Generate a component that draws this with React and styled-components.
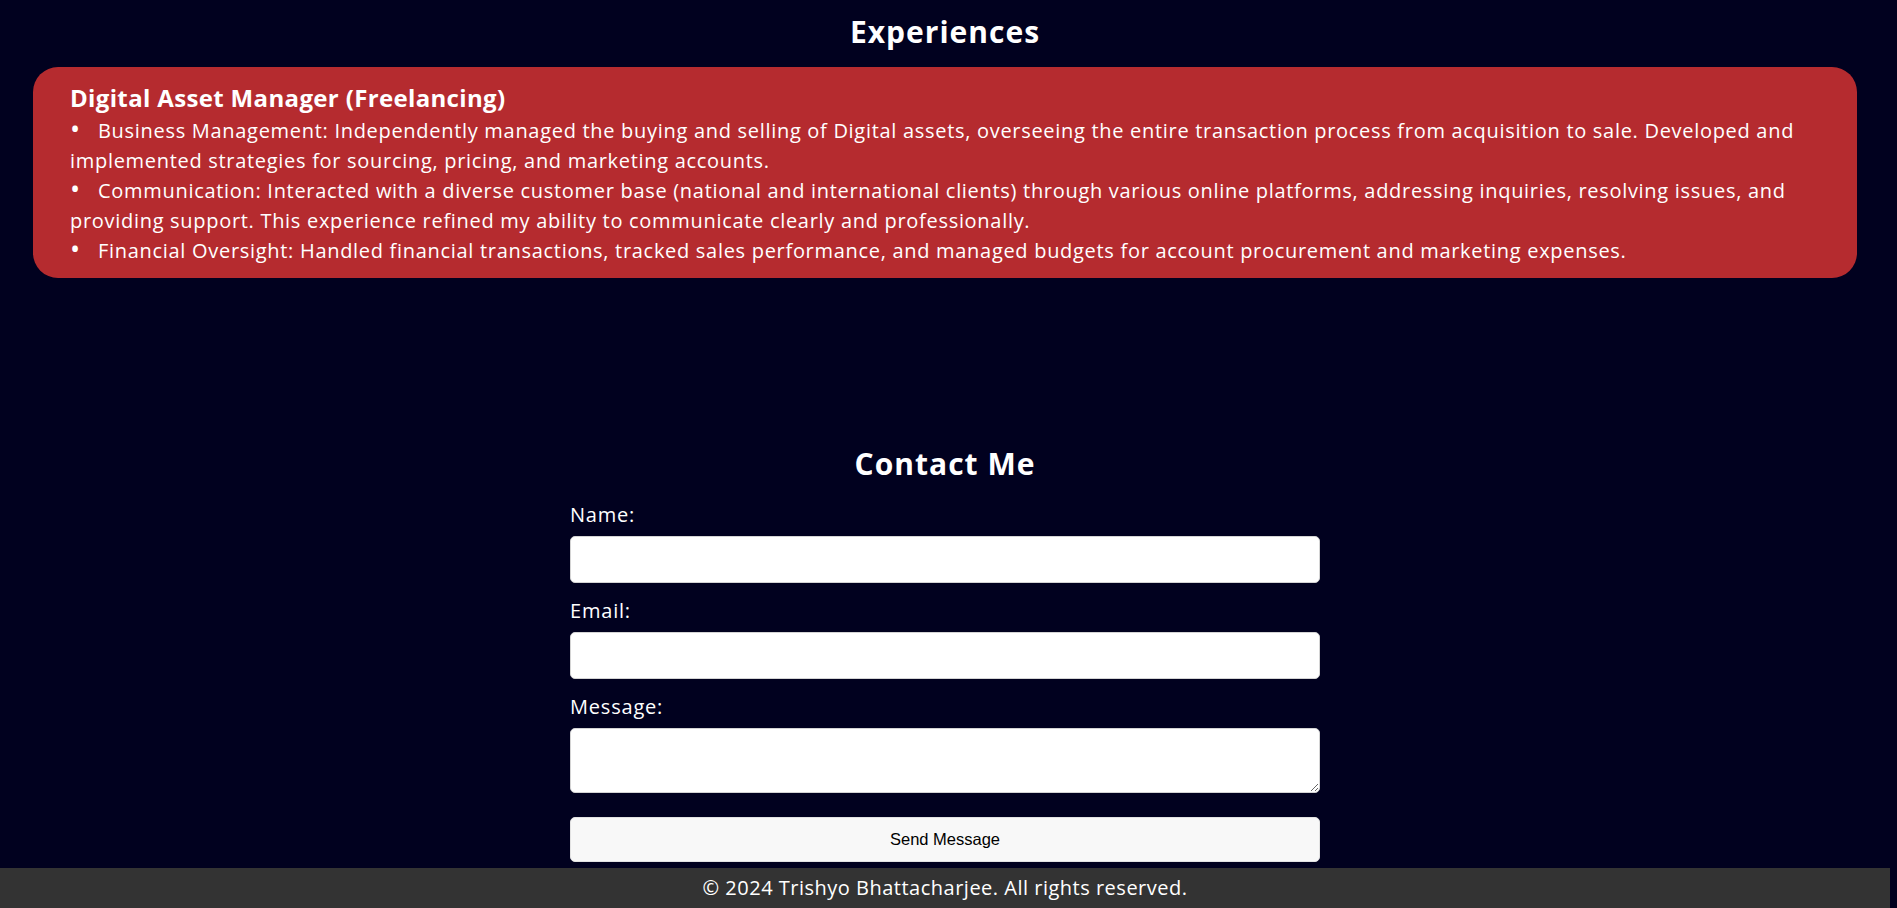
import React from 'react'
import styled, { createGlobalStyle } from 'styled-components'

const GlobalStyle = createGlobalStyle`
  * {
    box-sizing: border-box;
  }
  html,
  body {
    margin: 0;
    padding: 0;
    background: #01011f;
  }
  body {
    font-family: 'Open Sans', 'Liberation Sans', sans-serif;
    color: #fff;
    overflow: hidden;
  }
`

const Page = styled.div`
  min-height: 100vh;
  display: flex;
  flex-direction: column;
  padding-right: 7px;
`
const Section = styled.section`
  display: flex;
  flex-direction: column;
  align-items: center;
  margin-top: ${(p) => p.$top || '0'};
`
const Kicker = styled.p`
  margin: -22px 0 0;
  font-size: 20px;
  line-height: 30px;
  letter-spacing: 0.7px;
  color: #9a9a9a;
`
const Heading = styled.h2`
  margin: ${(p) => p.$top || '0'} 0 0;
  font-size: 30px;
  font-weight: 700;
  line-height: 43px;
  letter-spacing: 1px;
`
const Card = styled.div`
  align-self: stretch;
  margin: 14px 33px 0;
  padding: 13px 37px 12px;
  background: #b52b2f;
  border-radius: 25px;
`
const CardTitle = styled.h3`
  margin: 0;
  font-size: 24px;
  font-weight: 700;
  line-height: 36px;
  letter-spacing: 0.35px;
`
const Item = styled.p`
  margin: 0;
  font-size: 20px;
  line-height: 30px;
  letter-spacing: 0.7px;
`
const Dot = styled.span`
  display: inline-block;
  width: 20px;
  margin-right: 8px;
  transform: scale(1.35);
  transform-origin: 0 60%;
`
const Form = styled.form`
  width: 750px;
  margin-top: 16px;
  display: flex;
  flex-direction: column;
`
const Label = styled.label`
  font-size: 20px;
  line-height: 28px;
  letter-spacing: 0.8px;
  margin-bottom: 7px;
`
const Input = styled.input`
  height: 47px;
  margin-bottom: 14px;
  border: 1px solid #d4d4d4;
  border-radius: 5px;
  background: #fff;
`
const TextArea = styled.textarea`
  display: block;
  height: 65px;
  margin-bottom: 24px;
  border: 1px solid #d4d4d4;
  border-radius: 5px;
  background: #fff;
  resize: both;
`
const SendButton = styled.button`
  height: 45px;
  border: 1px solid #e2e2e2;
  border-radius: 5px;
  background: #f8f8f8;
  color: #000;
  font-family: 'Liberation Sans', Arial, sans-serif;
  font-size: 16.5px;
`
const Footer = styled.footer`
  margin-top: auto;
  height: 40px;
  background: #333;
  text-align: center;
  font-size: 20px;
  line-height: 40px;
  letter-spacing: 0.5px;
`

const duties = [
  'Business Management: Independently managed the buying and selling of Digital assets, overseeing the entire transaction process from acquisition to sale. Developed and implemented strategies for sourcing, pricing, and marketing accounts.',
  'Communication: Interacted with a diverse customer base (national and international clients) through various online platforms, addressing inquiries, resolving issues, and providing support. This experience refined my ability to communicate clearly and professionally.',
  'Financial Oversight: Handled financial transactions, tracked sales performance, and managed budgets for account procurement and marketing expenses.',
]

const App = () => {
  return (
    <>
      <GlobalStyle />
      <Page>
        <Section>
          <Kicker>What I have done so far</Kicker>
          <Heading $top="2px">Experiences</Heading>
          <Card>
            <CardTitle>Digital Asset Manager (Freelancing)</CardTitle>
            {duties.map((d) => (
              <Item key={d}>
                <Dot>•</Dot>
                {d}
              </Item>
            ))}
          </Card>
        </Section>

        <Section $top="164px">
          <Heading>Contact Me</Heading>
          <Form onSubmit={(e) => e.preventDefault()}>
            <Label htmlFor="name">Name:</Label>
            <Input id="name" type="text" />
            <Label htmlFor="email">Email:</Label>
            <Input id="email" type="email" />
            <Label htmlFor="message">Message:</Label>
            <TextArea id="message" />
            <SendButton type="submit">Send Message</SendButton>
          </Form>
        </Section>

        <Footer>© 2024 Trishyo Bhattacharjee. All rights reserved.</Footer>
      </Page>
    </>
  )
}

export default App
